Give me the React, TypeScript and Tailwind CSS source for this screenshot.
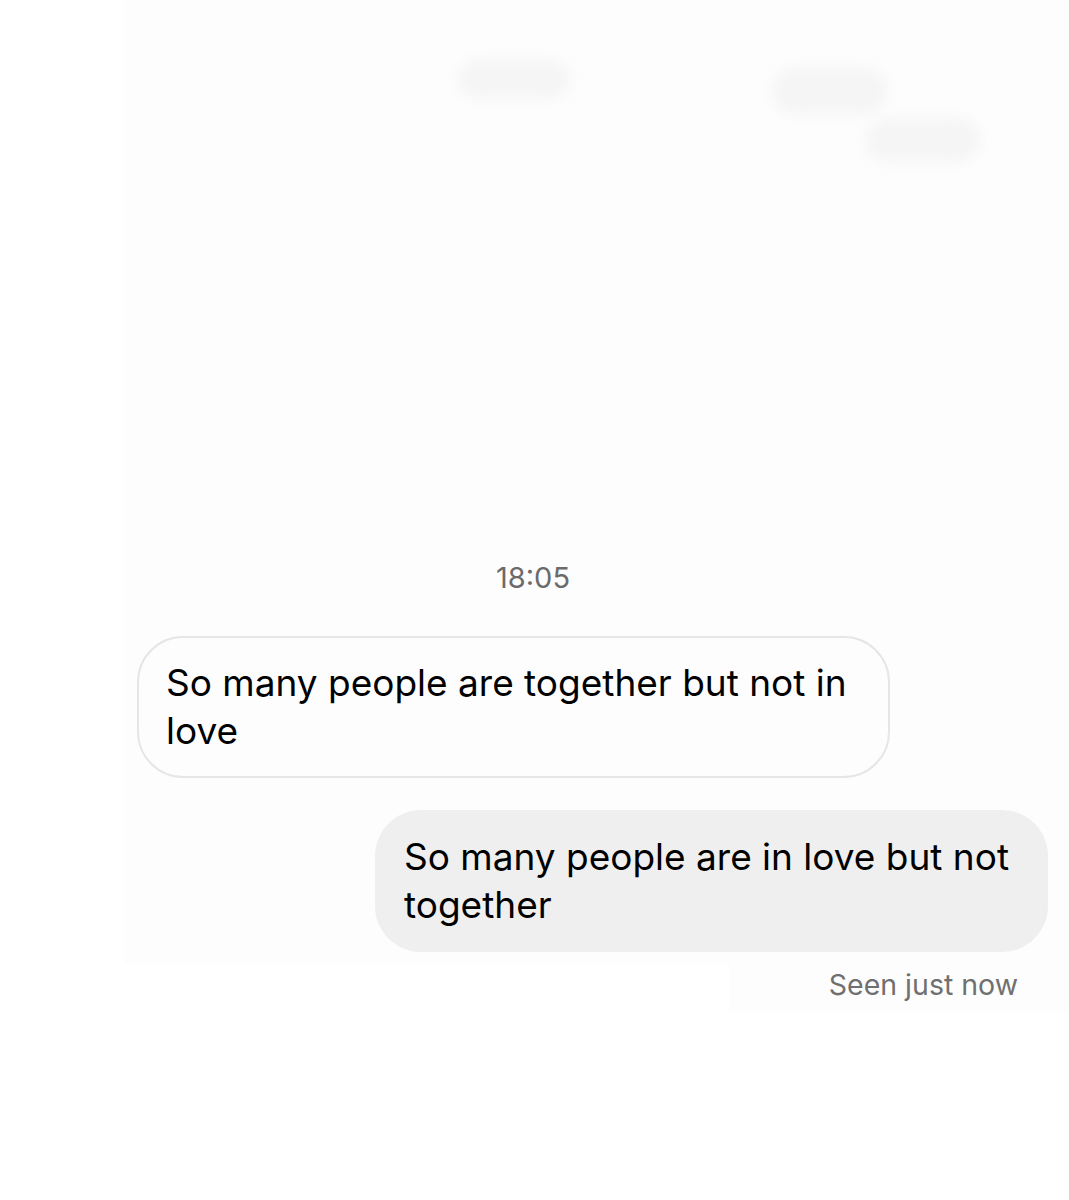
import React from "react";

const font = "font-['Inter','Liberation_Sans',sans-serif]";

function Smudge({ className }: { className: string }) {
  return <div className={`absolute rounded-full bg-[#f5f5f5] blur-[6px] ${className}`} />;
}

export default function App() {
  return (
    <div className={`relative h-[1200px] w-full bg-white ${font}`}>
      {/* chat panel */}
      <div className="ml-[124px] flex flex-col bg-[#fdfdfd] pb-[11px] pt-[561px]">
        <div className="pl-[372px] text-[29px] leading-[34px] text-[#6b6b6b]">18:05</div>

        <div className="ml-[13px] mt-[41px] w-[753px] rounded-[46px] border-2 border-[#e6e6e6] bg-[#fdfdfd] px-[27px] py-[21px] text-[37px] leading-[48px] text-black">
          So many people are together but not in love
        </div>

        <div className="mr-[21px] mt-[32px] w-[673px] self-end rounded-[46px] bg-[#efefef] px-[29px] py-[23px] text-[37px] leading-[48px] text-black">
          So many people are in love but not together
        </div>
      </div>

      <div className="ml-[729px] flex h-[50px] justify-end bg-[#fdfdfd] pr-[51px] text-[28.5px] leading-[44px] text-[#707070]">
        Seen just now
      </div>

      <Smudge className="left-[458px] top-[60px] h-[38px] w-[112px]" />
      <Smudge className="left-[772px] top-[68px] h-[46px] w-[116px]" />
      <Smudge className="left-[866px] top-[118px] h-[44px] w-[114px]" />
    </div>
  );
}
